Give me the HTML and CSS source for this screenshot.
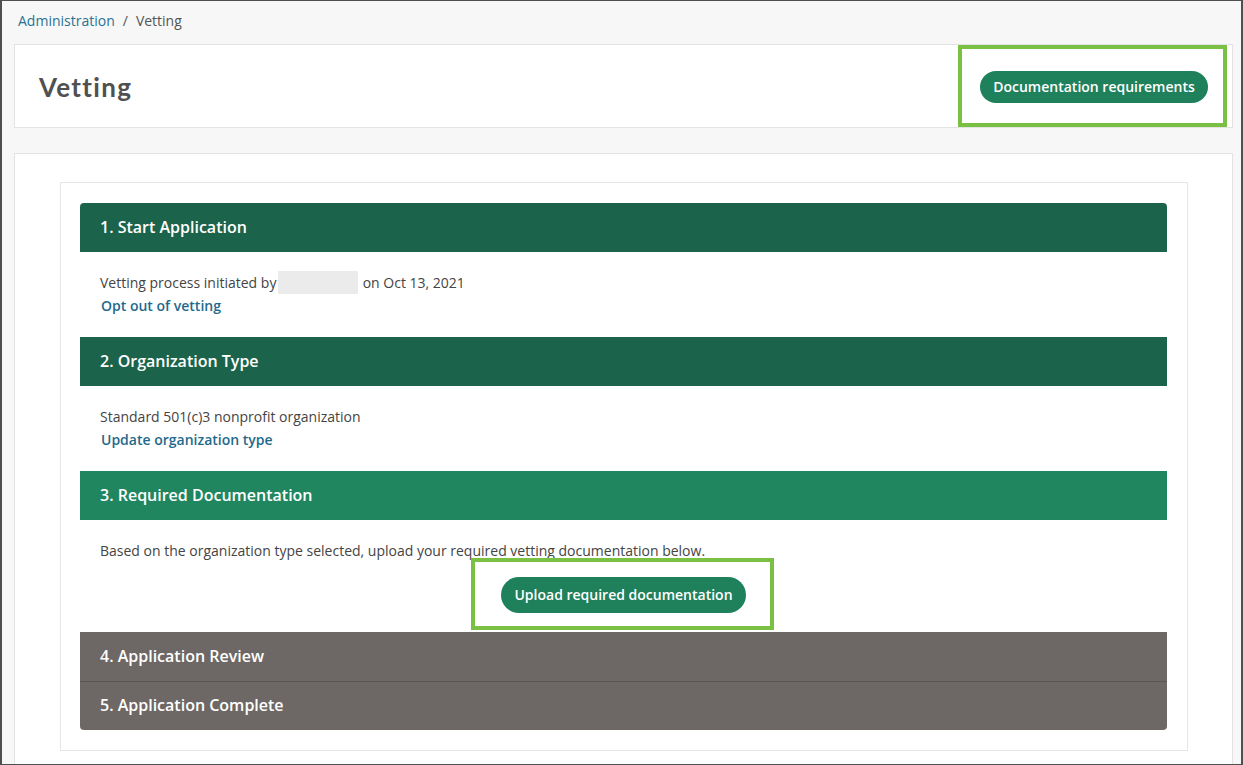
FILE: index.html
```html
<!DOCTYPE html>
<html lang="en">
<head>
<meta charset="utf-8">
<title>Vetting</title>
<link rel="stylesheet" href="styles.css">
</head>
<body>
<div class="frame">
  <nav class="breadcrumb">
    <a href="#" class="crumb-link">Administration</a>
    <span class="crumb-sep">/</span>
    <span class="crumb-current">Vetting</span>
  </nav>

  <header class="page-header">
    <h1 class="page-title">Vetting</h1>
    <div class="highlight-wrap">
      <button class="pill-btn doc-btn">Documentation requirements</button>
      <span class="highlight hl-doc"></span>
    </div>
  </header>

  <main class="main-panel">
    <section class="card">
      <div class="accordion">
        <div class="step-head dark">1. Start Application</div>
        <div class="step-body">
          <p class="step-text">Vetting process initiated by <span class="redacted"></span> on Oct 13, 2021</p>
          <a href="#" class="step-link">Opt out of vetting</a>
        </div>

        <div class="step-head dark">2. Organization Type</div>
        <div class="step-body">
          <p class="step-text">Standard 501(c)3 nonprofit organization</p>
          <a href="#" class="step-link">Update organization type</a>
        </div>

        <div class="step-head active">3. Required Documentation</div>
        <div class="step-body upload-body">
          <p class="step-text">Based on the organization type selected, upload your required vetting documentation below.</p>
          <div class="upload-row">
            <div class="highlight-wrap">
              <button class="pill-btn upload-btn">Upload required documentation</button>
              <span class="highlight hl-upload"></span>
            </div>
          </div>
        </div>

        <div class="step-head muted">4. Application Review</div>
        <div class="step-head muted last">5. Application Complete</div>
      </div>
    </section>
  </main>
</div>
</body>
</html>
```

FILE: styles.css
```css
* { box-sizing: border-box; }

html, body {
  margin: 0;
  padding: 0;
}

body {
  font-family: "Open Sans", "Noto Sans", "Liberation Sans", sans-serif;
  color: #444;
  background: #f7f7f7;
}

.frame {
  width: 1243px;
  height: 765px;
  border: 1px solid #4f4f4f;
  border-left-width: 2px;
  border-right-width: 2px;
  background: #f7f7f7;
  padding: 0 8px 0 12px;
  overflow: hidden;
}

.breadcrumb {
  height: 43px;
  display: flex;
  align-items: center;
  gap: 8px;
  padding: 0 0 4px 4px;
  font-size: 14px;
}

.crumb-link {
  color: #2a7294;
  text-decoration: none;
}

.crumb-sep { color: #555; }
.crumb-current { color: #555; }

.page-header {
  height: 84px;
  background: #fff;
  border: 1px solid #e3e3e3;
  display: flex;
  align-items: center;
  justify-content: space-between;
  padding: 0 24px 0 24px;
}

.page-title {
  margin: 0;
  font-family: "Lato", "Open Sans", sans-serif;
  font-weight: 700;
  font-size: 26px;
  color: #505050;
  letter-spacing: 1.3px;
  padding-top: 2px;
}

.highlight-wrap {
  position: relative;
  display: inline-block;
}

.pill-btn {
  font-family: "Open Sans", "Noto Sans", sans-serif;
  font-weight: 600;
  color: #fff;
  background: #1f805c;
  border: none;
  border-radius: 18px;
  font-size: 14px;
  cursor: pointer;
}

.doc-btn {
  width: 228px;
  height: 32px;
  padding: 0;
  margin-top: 1px;
}

.upload-btn {
  width: 245px;
  height: 36px;
  padding: 0 0 2px 0;
}

.highlight {
  position: absolute;
  border: 4px solid #79c043;
  pointer-events: none;
}

.hl-doc {
  left: -22px;
  right: -19px;
  top: -25px;
  bottom: -24px;
}

.hl-upload {
  left: -30px;
  right: -28px;
  top: -19px;
  bottom: -17px;
}

.main-panel {
  margin-top: 25px;
  background: #fff;
  border: 1px solid #e3e3e3;
  border-bottom: none;
  height: 640px;
  padding: 28px 44px 0 45px;
}

.card {
  border: 1px solid #e6e6e6;
  background: #fff;
  padding: 20px 20px 20px 19px;
  height: 569px;
}

.accordion {
  display: flex;
  flex-direction: column;
}

.step-head {
  height: 49px;
  display: flex;
  align-items: center;
  padding: 0 0 2px 20px;
  color: #fff;
  font-weight: 600;
  font-size: 16px;
}

.step-head.dark { background: #1b634a; }
.accordion > .step-head:first-child { border-radius: 4px 4px 0 0; }
.step-head.active { background: #1f865f; }
.step-head.muted { background: #6d6866; }
.step-head.muted + .step-head.muted { border-top: 1px solid #5a5554; height: 49px; }
.step-head.last { border-radius: 0 0 4px 4px; }

.step-body {
  padding: 19px 20px 20px 20px;
  font-size: 14px;
}

.step-text {
  margin: 0;
  line-height: 23px;
  color: #444;
}

.redacted {
  display: inline-block;
  width: 80px;
  height: 23px;
  background: #ebebeb;
  vertical-align: top;
  margin: 0 1px 0 -2px;
}

.step-link {
  display: block;
  line-height: 23px;
  color: #1f6a8c;
  font-weight: 600;
  text-decoration: none;
  padding-left: 1px;
}

.upload-body {
  padding: 19px 20px 19px 20px;
}

.upload-row {
  display: flex;
  justify-content: center;
  margin-top: 15px;
}
```
